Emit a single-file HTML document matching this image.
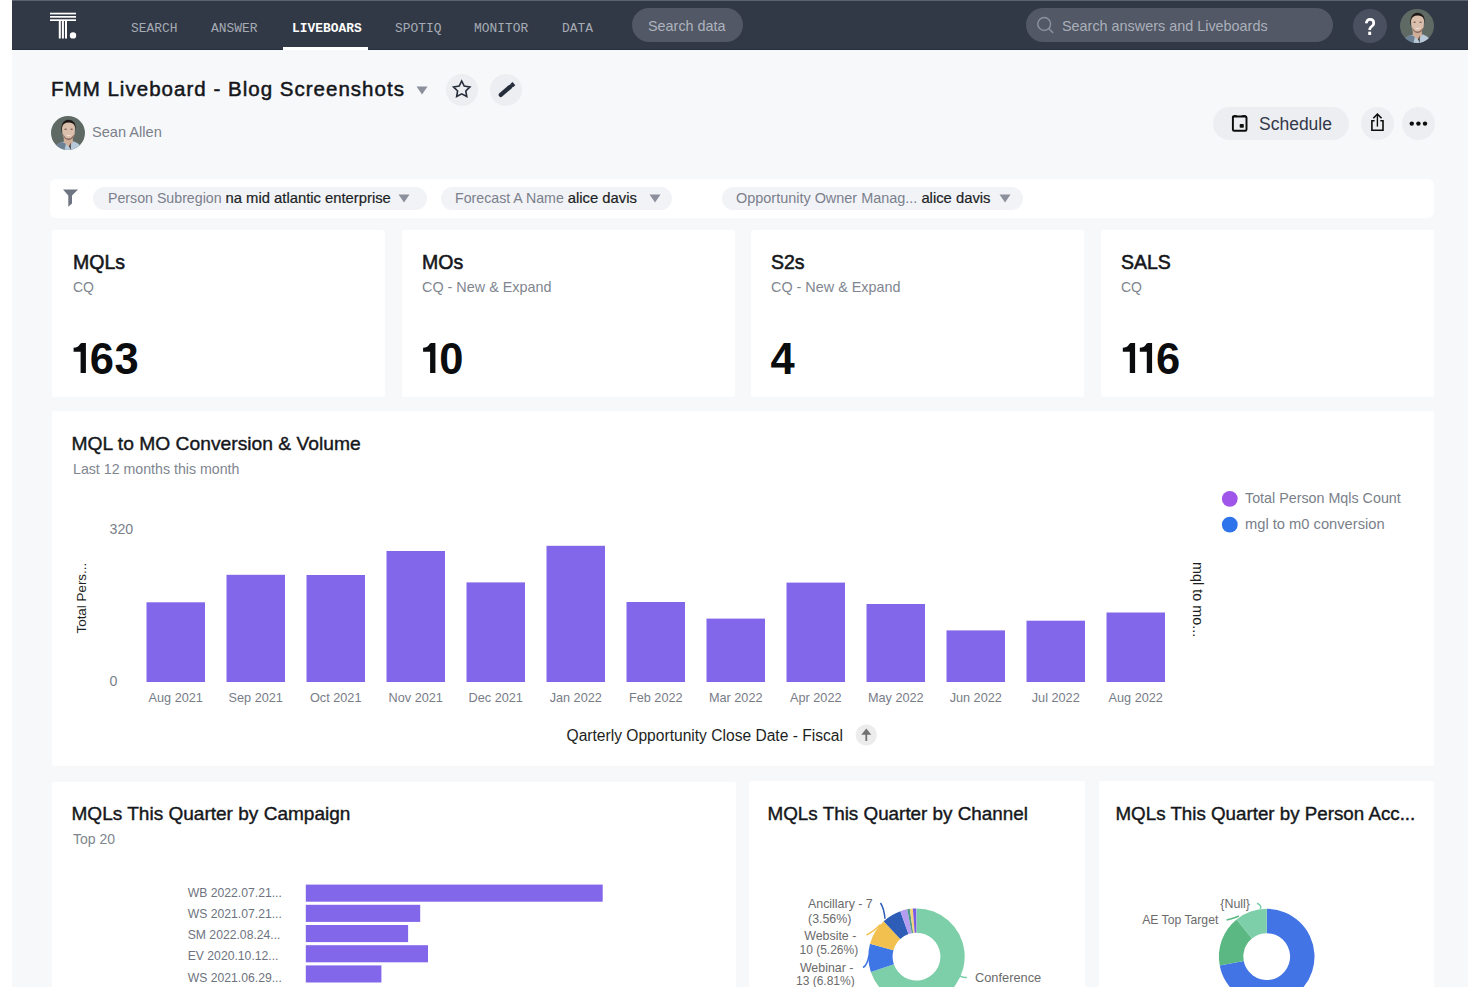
<!DOCTYPE html>
<html><head><meta charset="utf-8">
<style>
*{box-sizing:border-box}
html,body{margin:0;padding:0}
body{width:1480px;height:987px;overflow:hidden;background:#fff;position:relative;font-family:"Liberation Sans",sans-serif;color:#1d1f24}
.a{position:absolute;white-space:nowrap}
#bg{left:12px;top:0;width:1456px;height:987px;background:#f7f8fa}
#nav{left:12px;top:0;width:1456px;height:50px;background:#323946;border-top:1px solid #5d6270;border-bottom:1px solid #2a303b}
.ni{font-family:"Liberation Mono",monospace;font-size:12.9px;color:#a6abb5;top:20px;line-height:17px}
.card{background:#fff;border-radius:2px}
.circ{border-radius:50%}
</style></head><body>
<div id="bg" class="a"></div>
<div id="nav" class="a"></div>
<!-- logo -->
<svg class="a" style="left:0;top:0" width="90" height="50" viewBox="0 0 90 50">
  <rect x="50" y="12.7" width="26" height="1.7" fill="#fff"/>
  <rect x="50" y="16" width="26" height="1.7" fill="#fff"/>
  <rect x="50" y="19.3" width="26" height="1.7" fill="#fff"/>
  <rect x="58.8" y="20.5" width="2" height="18" fill="#fff"/>
  <rect x="61.9" y="20.5" width="2" height="18" fill="#fff"/>
  <rect x="65" y="20.5" width="2" height="18" fill="#fff"/>
  <circle cx="73" cy="35.4" r="3.2" fill="#fff"/>
</svg>
<div class="a ni" style="left:131px">SEARCH</div>
<div class="a ni" style="left:211px">ANSWER</div>
<div class="a ni" style="left:292px;color:#fff;font-weight:700">LIVEBOARS</div>
<div class="a" style="left:283px;top:47px;width:85px;height:3px;background:#fff"></div>
<div class="a ni" style="left:395px">SPOTIQ</div>
<div class="a ni" style="left:474px">MONITOR</div>
<div class="a ni" style="left:562px">DATA</div>
<div class="a" style="left:632px;top:8px;width:111px;height:34px;border-radius:17px;background:#525866"></div>
<div class="a" style="left:648px;top:18px;font-size:14.4px;line-height:17px;color:#aeb3bd">Search data</div>
<div class="a" style="left:1026px;top:8px;width:307px;height:34px;border-radius:17px;background:#525866"></div>
<svg class="a" style="left:1035px;top:15px" width="20" height="20" viewBox="0 0 20 20"><circle cx="9.2" cy="9" r="6.4" fill="none" stroke="#8c919c" stroke-width="1.5"/><line x1="13.9" y1="13.8" x2="17.7" y2="17.5" stroke="#8c919c" stroke-width="1.6" stroke-linecap="round"/></svg>
<div class="a" style="left:1062px;top:18px;font-size:14.4px;line-height:17px;color:#aab0ba">Search answers and Liveboards</div>
<div class="a circ" style="left:1353px;top:9px;width:34px;height:34px;background:#4a5060"></div>
<div class="a" style="left:1353px;top:13px;width:34px;text-align:center;font-size:20px;line-height:26px;font-weight:700;color:#fff;transform:scaleY(1.22)">?</div>
<!-- nav avatar -->
<svg class="a" style="left:1400px;top:9px" width="34" height="34" viewBox="0 0 34 34">
  <defs><clipPath id="ca1"><circle cx="17" cy="17" r="17"/></clipPath><filter id="blr" x="-10%" y="-10%" width="120%" height="120%"><feGaussianBlur stdDeviation="0.45"/></filter></defs>
  <g clip-path="url(#ca1)">
    <rect width="34" height="34" fill="#5f6a65"/>
    <g filter="url(#blr)">
    <path d="M2 36 Q4 28.5 11 26 L16 25 L23 25.5 Q30 27.5 33 36Z" fill="#b7c8d8"/>
    <path d="M2 36 Q4 28.5 11 26 L15 27.5 L13 36Z" fill="#6d8194"/>
    <path d="M12.5 19 L21.5 19 L22 26 L18.5 31 L13 26.5Z" fill="#cfae9a"/>
    <path d="M18.2 30.5 L19.5 26.5 L19.8 34Z" fill="#2e2624"/>
    <path d="M11 12 Q11 4.8 17.6 4.6 Q24 4.8 24 12.5 L23.6 18 Q22.5 23.5 17.6 24.2 Q12.6 23.5 11.6 18Z" fill="#dbbfad"/>
    <path d="M11.6 17 Q12.6 23.5 17.6 24.2 Q22.5 23.5 23.6 18 L22.4 19.5 Q20 22.5 17.6 22.5 Q14.5 22.5 12.8 19.5Z" fill="#8c6b5c"/>
    <path d="M10.2 17.5 Q9.4 4 17.6 3.7 Q25.4 3.9 24.8 15 L23.9 10.2 Q22.5 6.8 17.6 6.6 Q12.2 6.8 11.2 11 Z" fill="#1f1917"/>
    <ellipse cx="14.6" cy="13.2" rx="1.3" ry="0.8" fill="#6a4c40" opacity="0.8"/>
    <ellipse cx="20.6" cy="13.2" rx="1.3" ry="0.8" fill="#6a4c40" opacity="0.8"/>
    <path d="M14.2 18.6 Q17.6 21.2 21 18.6 Q17.6 19.6 14.2 18.6Z" fill="#f3e6dc"/>
    </g>
  </g>
</svg>

<!-- header -->
<div class="a" style="left:51px;top:77px;font-size:20.5px;line-height:24px;color:#14161a;-webkit-text-stroke:0.5px #14161a;letter-spacing:1.02px">FMM Liveboard - Blog Screenshots</div>
<svg class="a" style="left:416px;top:86px" width="12" height="9" viewBox="0 0 12 9"><path d="M0.5 0.5 L11.5 0.5 L6 8.5Z" fill="#8b909c"/></svg>
<div class="a circ" style="left:446px;top:74px;width:32px;height:32px;background:#eceef1"></div>
<svg class="a" style="left:0;top:0" width="540" height="120" viewBox="0 0 540 120"><path d="M461.70 81.00 L464.23 86.12 L469.88 86.94 L465.79 90.93 L466.75 96.56 L461.70 93.90 L456.65 96.56 L457.61 90.93 L453.52 86.94 L459.17 86.12Z" fill="none" stroke="#262d3a" stroke-width="1.6" stroke-linejoin="miter" stroke-miterlimit="10"/></svg>
<div class="a circ" style="left:490px;top:74px;width:32px;height:32px;background:#eceef1"></div>
<svg class="a" style="left:0;top:0" width="540" height="120" viewBox="0 0 540 120"><path d="M500.8 94.9 L510 87" stroke="#262d3a" stroke-width="4.3" stroke-linecap="round"/><path d="M511.4 85.8 L513.9 83.7" stroke="#262d3a" stroke-width="4.3" stroke-linecap="butt"/></svg>
<!-- author -->
<svg class="a" style="left:51px;top:116px" width="34" height="34" viewBox="0 0 34 34">
  <defs><clipPath id="ca2"><circle cx="17" cy="17" r="17"/></clipPath></defs>
  <g clip-path="url(#ca2)">
    <rect width="34" height="34" fill="#5f6a65"/>
    <g filter="url(#blr)">
    <path d="M2 36 Q4 28.5 11 26 L16 25 L23 25.5 Q30 27.5 33 36Z" fill="#b7c8d8"/>
    <path d="M2 36 Q4 28.5 11 26 L15 27.5 L13 36Z" fill="#6d8194"/>
    <path d="M12.5 19 L21.5 19 L22 26 L18.5 31 L13 26.5Z" fill="#cfae9a"/>
    <path d="M18.2 30.5 L19.5 26.5 L19.8 34Z" fill="#2e2624"/>
    <path d="M11 12 Q11 4.8 17.6 4.6 Q24 4.8 24 12.5 L23.6 18 Q22.5 23.5 17.6 24.2 Q12.6 23.5 11.6 18Z" fill="#dbbfad"/>
    <path d="M11.6 17 Q12.6 23.5 17.6 24.2 Q22.5 23.5 23.6 18 L22.4 19.5 Q20 22.5 17.6 22.5 Q14.5 22.5 12.8 19.5Z" fill="#8c6b5c"/>
    <path d="M10.2 17.5 Q9.4 4 17.6 3.7 Q25.4 3.9 24.8 15 L23.9 10.2 Q22.5 6.8 17.6 6.6 Q12.2 6.8 11.2 11 Z" fill="#1f1917"/>
    <ellipse cx="14.6" cy="13.2" rx="1.3" ry="0.8" fill="#6a4c40" opacity="0.8"/>
    <ellipse cx="20.6" cy="13.2" rx="1.3" ry="0.8" fill="#6a4c40" opacity="0.8"/>
    <path d="M14.2 18.6 Q17.6 21.2 21 18.6 Q17.6 19.6 14.2 18.6Z" fill="#f3e6dc"/>
    </g>
  </g>
</svg>
<div class="a" style="left:92px;top:124px;font-size:14.6px;line-height:17px;color:#7b808b">Sean Allen</div>

<!-- right header buttons -->
<div class="a" style="left:1213px;top:107px;width:136px;height:33px;border-radius:17px;background:#eceef1"></div>
<svg class="a" style="left:0;top:0" width="1260" height="140" viewBox="0 0 1260 140"><rect x="1232.9" y="116.5" width="13.6" height="14.2" rx="1.3" fill="none" stroke="#0d0d0d" stroke-width="1.95"/><path d="M1232.6 117.5 Q1232.7 115.6 1235.2 115.7 Q1236.5 116 1237.4 116.6 M1241.2 116.6 Q1242.3 116 1243.6 115.7 Q1246.2 115.6 1246.4 117.5" fill="none" stroke="#0d0d0d" stroke-width="1.6"/><rect x="1239.7" y="124" width="4.1" height="3.7" rx="0.8" fill="#0d0d0d"/></svg>
<div class="a" style="left:1259px;top:114px;font-size:17.5px;line-height:20px;color:#333849">Schedule</div>
<div class="a circ" style="left:1361px;top:107px;width:33px;height:33px;background:#eceef1"></div>
<svg class="a" style="left:0;top:0" width="1440" height="140" viewBox="0 0 1440 140"><path d="M1374.6 120.8 L1371.9 120.8 L1371.9 130.3 L1383 130.3 L1383 120.8 L1380.3 120.8" fill="none" stroke="#0d0d0d" stroke-width="1.6"/><path d="M1377.4 126.6 L1377.4 114.5" fill="none" stroke="#0d0d0d" stroke-width="1.4"/><path d="M1373.3 118.2 L1377.4 114.1 L1381.6 118.2" fill="none" stroke="#0d0d0d" stroke-width="1.6"/></svg>
<div class="a circ" style="left:1402px;top:107px;width:33px;height:33px;background:#eceef1"></div>
<svg class="a" style="left:1402px;top:107px" width="33" height="33" viewBox="0 0 33 33"><circle cx="9.8" cy="16.6" r="2.2" fill="#0d0d0d"/><circle cx="16.4" cy="16.6" r="2.2" fill="#0d0d0d"/><circle cx="23" cy="16.6" r="2.2" fill="#0d0d0d"/></svg>

<!-- filter bar -->
<div class="a card" style="left:50px;top:179px;width:1384px;height:39px;border-radius:6px"></div>
<svg class="a" style="left:62px;top:189px" width="17" height="19" viewBox="0 0 17 19"><path d="M1 0.5 L16 0.5 L10 6.5 L10 14.5 L6.3 17.8 L6.3 6.5Z" fill="#6e7482"/></svg>
<div class="a" style="left:93px;top:187px;width:334px;height:23px;border-radius:12px;background:#f2f3f7"></div>
<div class="a" style="left:108px;top:190px;font-size:14.2px;line-height:17px;color:#7a808c">Person Subregion <span style="color:#1c1f25;font-size:14.8px;-webkit-text-stroke:0.2px #1c1f25">na mid atlantic enterprise</span></div>
<svg class="a" style="left:398px;top:194px" width="12" height="9" viewBox="0 0 12 9"><path d="M0.5 0.5 L11.5 0.5 L6 8.5Z" fill="#8b909c"/></svg>
<div class="a" style="left:441px;top:187px;width:231px;height:23px;border-radius:12px;background:#f2f3f7"></div>
<div class="a" style="left:455px;top:190px;font-size:14.2px;line-height:17px;color:#7a808c">Forecast A Name <span style="color:#1c1f25;font-size:14.8px;-webkit-text-stroke:0.2px #1c1f25">alice davis</span></div>
<svg class="a" style="left:649px;top:194px" width="12" height="9" viewBox="0 0 12 9"><path d="M0.5 0.5 L11.5 0.5 L6 8.5Z" fill="#8b909c"/></svg>
<div class="a" style="left:722px;top:187px;width:301px;height:23px;border-radius:12px;background:#f2f3f7"></div>
<div class="a" style="left:736px;top:190px;font-size:14.45px;line-height:17px;color:#7a808c">Opportunity Owner Manag... <span style="color:#1c1f25;font-size:14.8px;-webkit-text-stroke:0.2px #1c1f25">alice davis</span></div>
<svg class="a" style="left:999px;top:194px" width="12" height="9" viewBox="0 0 12 9"><path d="M0.5 0.5 L11.5 0.5 L6 8.5Z" fill="#8b909c"/></svg>

<!-- KPI cards -->
<div class="a card" style="left:52px;top:230px;width:333px;height:167px"></div>
<div class="a card" style="left:402px;top:230px;width:333px;height:167px"></div>
<div class="a card" style="left:751px;top:230px;width:333px;height:167px"></div>
<div class="a card" style="left:1101px;top:230px;width:333px;height:167px"></div>


<div class="a" style="left:73px;top:251px;font-size:19.5px;line-height:22px;color:#15171b;-webkit-text-stroke:0.55px #15171b">MQLs</div>
<div class="a" style="left:73px;top:279px;font-size:14px;line-height:17px;color:#80868f">CQ</div>
<svg class="a" style="left:0;top:0" width="1480" height="400" viewBox="0 0 1480 400" font-family="Liberation Sans, sans-serif" font-weight="700" font-size="43.5" fill="#0b0c0e">
<path transform="translate(73.6,343.1)" d="M7.9 0 L12.3 0 L12.3 29.8 L7 29.8 L7 8.6 L0 8.6 L0 4.7 Q4.2 4.6 5.6 2.2 Q6.6 0.5 7.9 0Z"/><text x="89.7" y="373.5">6</text><text x="114.4" y="373.5">3</text>
<path transform="translate(423.1,343.1)" d="M7.9 0 L12.3 0 L12.3 29.8 L7 29.8 L7 8.6 L0 8.6 L0 4.7 Q4.2 4.6 5.6 2.2 Q6.6 0.5 7.9 0Z"/><text x="439.2" y="373.5">0</text>
<text x="770.6" y="373.5">4</text>
<path transform="translate(1122.8,343.1)" d="M7.9 0 L12.3 0 L12.3 29.8 L7 29.8 L7 8.6 L0 8.6 L0 4.7 Q4.2 4.6 5.6 2.2 Q6.6 0.5 7.9 0Z"/><path transform="translate(1139.8,343.1)" d="M7.9 0 L12.3 0 L12.3 29.8 L7 29.8 L7 8.6 L0 8.6 L0 4.7 Q4.2 4.6 5.6 2.2 Q6.6 0.5 7.9 0Z"/><text x="1156" y="373.5">6</text>
</svg>
<div class="a" style="left:422px;top:251px;font-size:19.5px;line-height:22px;color:#15171b;-webkit-text-stroke:0.55px #15171b">MOs</div>
<div class="a" style="left:422px;top:279px;font-size:14.4px;line-height:17px;color:#80868f">CQ - New &amp; Expand</div>
<div class="a" style="left:771px;top:251px;font-size:19.5px;line-height:22px;color:#15171b;-webkit-text-stroke:0.55px #15171b">S2s</div>
<div class="a" style="left:771px;top:279px;font-size:14.4px;line-height:17px;color:#80868f">CQ - New &amp; Expand</div>
<div class="a" style="left:1121px;top:251px;font-size:19.5px;line-height:22px;color:#15171b;-webkit-text-stroke:0.55px #15171b">SALS</div>
<div class="a" style="left:1121px;top:279px;font-size:14px;line-height:17px;color:#80868f">CQ</div>

<!-- chart card -->
<div class="a card" style="left:52px;top:411px;width:1382px;height:355px"></div>
<div class="a" style="left:71.5px;top:433px;font-size:19.25px;line-height:22px;color:#15171b;-webkit-text-stroke:0.4px #15171b">MQL to MO Conversion &amp; Volume</div>
<div class="a" style="left:73px;top:461px;font-size:14.2px;line-height:17px;color:#80868f">Last 12 months this month</div>
<svg class="a" style="left:0;top:0" width="1480" height="987" viewBox="0 0 1480 987" font-family="Liberation Sans, sans-serif">
<text x="109.5" y="534" font-size="14.2" fill="#7a7f8a">320</text>
<text x="109.5" y="686" font-size="14.2" fill="#7a7f8a">0</text>
<text transform="translate(86,633.5) rotate(-90)" font-size="13.4" fill="#1d1f23">Total Pers...</text>
<text transform="translate(1192.5,562) rotate(90)" font-size="14.4" fill="#1d1f23">mql to mo...</text>
<rect x="146.5" y="602.3" width="58.5" height="79.7" fill="#8367ea"/>
<text x="175.75" y="702" text-anchor="middle" font-size="12.7" fill="#777c87">Aug 2021</text>
<rect x="226.5" y="574.8" width="58.5" height="107.2" fill="#8367ea"/>
<text x="255.75" y="702" text-anchor="middle" font-size="12.7" fill="#777c87">Sep 2021</text>
<rect x="306.5" y="575.0" width="58.5" height="107.0" fill="#8367ea"/>
<text x="335.75" y="702" text-anchor="middle" font-size="12.7" fill="#777c87">Oct 2021</text>
<rect x="386.5" y="551.0" width="58.5" height="131.0" fill="#8367ea"/>
<text x="415.75" y="702" text-anchor="middle" font-size="12.7" fill="#777c87">Nov 2021</text>
<rect x="466.5" y="582.4" width="58.5" height="99.6" fill="#8367ea"/>
<text x="495.75" y="702" text-anchor="middle" font-size="12.7" fill="#777c87">Dec 2021</text>
<rect x="546.5" y="545.8" width="58.5" height="136.2" fill="#8367ea"/>
<text x="575.75" y="702" text-anchor="middle" font-size="12.7" fill="#777c87">Jan 2022</text>
<rect x="626.5" y="602.0" width="58.5" height="80.0" fill="#8367ea"/>
<text x="655.75" y="702" text-anchor="middle" font-size="12.7" fill="#777c87">Feb 2022</text>
<rect x="706.5" y="618.6" width="58.5" height="63.4" fill="#8367ea"/>
<text x="735.75" y="702" text-anchor="middle" font-size="12.7" fill="#777c87">Mar 2022</text>
<rect x="786.5" y="582.6" width="58.5" height="99.4" fill="#8367ea"/>
<text x="815.75" y="702" text-anchor="middle" font-size="12.7" fill="#777c87">Apr 2022</text>
<rect x="866.5" y="604.0" width="58.5" height="78.0" fill="#8367ea"/>
<text x="895.75" y="702" text-anchor="middle" font-size="12.7" fill="#777c87">May 2022</text>
<rect x="946.5" y="630.4" width="58.5" height="51.6" fill="#8367ea"/>
<text x="975.75" y="702" text-anchor="middle" font-size="12.7" fill="#777c87">Jun 2022</text>
<rect x="1026.5" y="620.7" width="58.5" height="61.3" fill="#8367ea"/>
<text x="1055.75" y="702" text-anchor="middle" font-size="12.7" fill="#777c87">Jul 2022</text>
<rect x="1106.5" y="612.5" width="58.5" height="69.5" fill="#8367ea"/>
<text x="1135.75" y="702" text-anchor="middle" font-size="12.7" fill="#777c87">Aug 2022</text>

<text x="566.5" y="740.5" font-size="15.6" fill="#1d1f22">Qarterly Opportunity Close Date - Fiscal</text>
<circle cx="866.3" cy="735" r="10.6" fill="#ececec"/>
<path d="M866.3 741 L866.3 733" fill="none" stroke="#727272" stroke-width="1.8"/><path d="M861.3 734.7 L866.3 728.6 L871.3 734.7Z" fill="#727272"/>
<circle cx="1229.8" cy="498.8" r="7.9" fill="#9f55ea"/>
<circle cx="1229.8" cy="524.7" r="7.9" fill="#2f74ea"/>
<text x="1245" y="502.8" font-size="14.3" fill="#7a7f8a">Total Person Mqls Count</text>
<text x="1245" y="529" font-size="14.7" fill="#7a7f8a">mgl to m0 conversion</text>
</svg>

<!-- bottom cards -->
<div class="a card" style="left:52px;top:782px;width:684px;height:220px"></div>
<div class="a card" style="left:749px;top:781px;width:336px;height:220px"></div>
<div class="a card" style="left:1099px;top:781px;width:335px;height:220px"></div>
<div class="a" style="left:71.5px;top:803px;font-size:19.05px;line-height:22px;color:#15171b;-webkit-text-stroke:0.4px #15171b">MQLs This Quarter by Campaign</div>
<div class="a" style="left:73px;top:831px;font-size:14px;line-height:17px;color:#80868f">Top 20</div>
<div class="a" style="left:767.5px;top:803px;font-size:18.85px;line-height:22px;color:#15171b;-webkit-text-stroke:0.4px #15171b">MQLs This Quarter by Channel</div>
<div class="a" style="left:1115.5px;top:803px;font-size:18.75px;line-height:22px;color:#15171b;-webkit-text-stroke:0.4px #15171b">MQLs This Quarter by Person Acc...</div>
<svg class="a" style="left:0;top:0" width="1480" height="987" viewBox="0 0 1480 987" font-family="Liberation Sans, sans-serif">
<rect x="305.8" y="884.6" width="296.9" height="17.1" fill="#8367ea"/>
<text x="187.7" y="896.5" font-size="12.2" fill="#6e7380">WB 2022.07.21...</text>
<rect x="305.8" y="904.8" width="114.4" height="17.1" fill="#8367ea"/>
<text x="187.7" y="917.9" font-size="12.2" fill="#6e7380">WS 2021.07.21...</text>
<rect x="305.8" y="925" width="102.3" height="17.1" fill="#8367ea"/>
<text x="187.7" y="939.1" font-size="12.2" fill="#6e7380">SM 2022.08.24...</text>
<rect x="305.8" y="945.2" width="122.2" height="17.1" fill="#8367ea"/>
<text x="187.7" y="960.3" font-size="12.2" fill="#6e7380">EV 2020.10.12...</text>
<rect x="305.8" y="965.4" width="75.6" height="17.1" fill="#8367ea"/>
<text x="187.7" y="981.6" font-size="12.2" fill="#6e7380">WS 2021.06.29...</text>

<path d="M916.50 908.40 A48.2 48.2 0 1 1 870.84 972.05 L893.86 964.26 A23.9 23.9 0 1 0 916.50 932.70Z" fill="#7ccfa8"/>
<path d="M870.84 972.05 A48.2 48.2 0 0 1 870.03 943.80 L893.46 950.25 A23.9 23.9 0 0 0 893.86 964.26Z" fill="#3f76e5"/>
<path d="M870.03 943.80 A48.2 48.2 0 0 1 883.69 921.29 L900.23 939.09 A23.9 23.9 0 0 0 893.46 950.25Z" fill="#f2c04f"/>
<path d="M883.69 921.29 A48.2 48.2 0 0 1 900.33 911.19 L908.48 934.08 A23.9 23.9 0 0 0 900.23 939.09Z" fill="#2d5db6"/>
<path d="M900.33 911.19 A48.2 48.2 0 0 1 907.14 909.32 L911.86 933.16 A23.9 23.9 0 0 0 908.48 934.08Z" fill="#b49df1"/>
<path d="M907.14 909.32 A48.2 48.2 0 0 1 909.79 908.87 L913.17 932.93 A23.9 23.9 0 0 0 911.86 933.16Z" fill="#4f9b8c"/>
<path d="M909.79 908.87 A48.2 48.2 0 0 1 912.80 908.54 L914.67 932.77 A23.9 23.9 0 0 0 913.17 932.93Z" fill="#f3d57c"/>
<path d="M912.80 908.54 A48.2 48.2 0 0 1 916.25 908.40 L916.37 932.70 A23.9 23.9 0 0 0 914.67 932.77Z" fill="#7a5ce4"/>
<path d="M1266.70 908.80 A47.8 47.8 0 1 1 1219.72 965.39 L1243.70 960.90 A23.4 23.4 0 1 0 1266.70 933.20Z" fill="#4274e5"/>
<path d="M1219.72 965.39 A47.8 47.8 0 0 1 1236.62 919.45 L1251.97 938.41 A23.4 23.4 0 0 0 1243.70 960.90Z" fill="#5cb883"/>
<path d="M1236.62 919.45 A47.8 47.8 0 0 1 1266.70 908.80 L1266.70 933.20 A23.4 23.4 0 0 0 1251.97 938.41Z" fill="#7ccfa8"/>
<g font-size="12.4" fill="#6b6b6b">
<text x="808" y="908.4">Ancillary - 7</text>
<text x="808" y="922.5">(3.56%)</text>
<text x="804.2" y="939.6">Website -</text>
<text x="799.5" y="953.6" font-size="12">10 (5.26%)</text>
<text x="799.9" y="971.8">Webinar -</text>
<text x="796" y="985.3" font-size="12">13 (6.81%)</text>
<text x="975" y="981.8" font-size="12.8">Conference</text>
<text x="1220.3" y="908">{Null}</text>
<text x="1142.2" y="924.2" font-size="12.2">AE Top Target</text>
</g>
<path d="M885 918.8 Q884 908 880.5 903" fill="none" stroke="#2d5db6" stroke-width="1.5"/>
<path d="M880.5 924.5 Q873 932 866.5 935" fill="none" stroke="#f2c04f" stroke-width="1.5"/>
<path d="M869 955.5 Q867 966 863 967.5" fill="none" stroke="#3f76e5" stroke-width="1.5"/>
<path d="M960 976 Q964 978 967 977.5" fill="none" stroke="#7ccfa8" stroke-width="1.5"/>
<path d="M1260.4 909.3 Q1262 905 1257 903.2" fill="none" stroke="#7ccfa8" stroke-width="1.5"/>
<path d="M1238.8 916 Q1235 918 1226.6 919.9" fill="none" stroke="#5cb883" stroke-width="1.5"/>
</svg>
</body></html>
